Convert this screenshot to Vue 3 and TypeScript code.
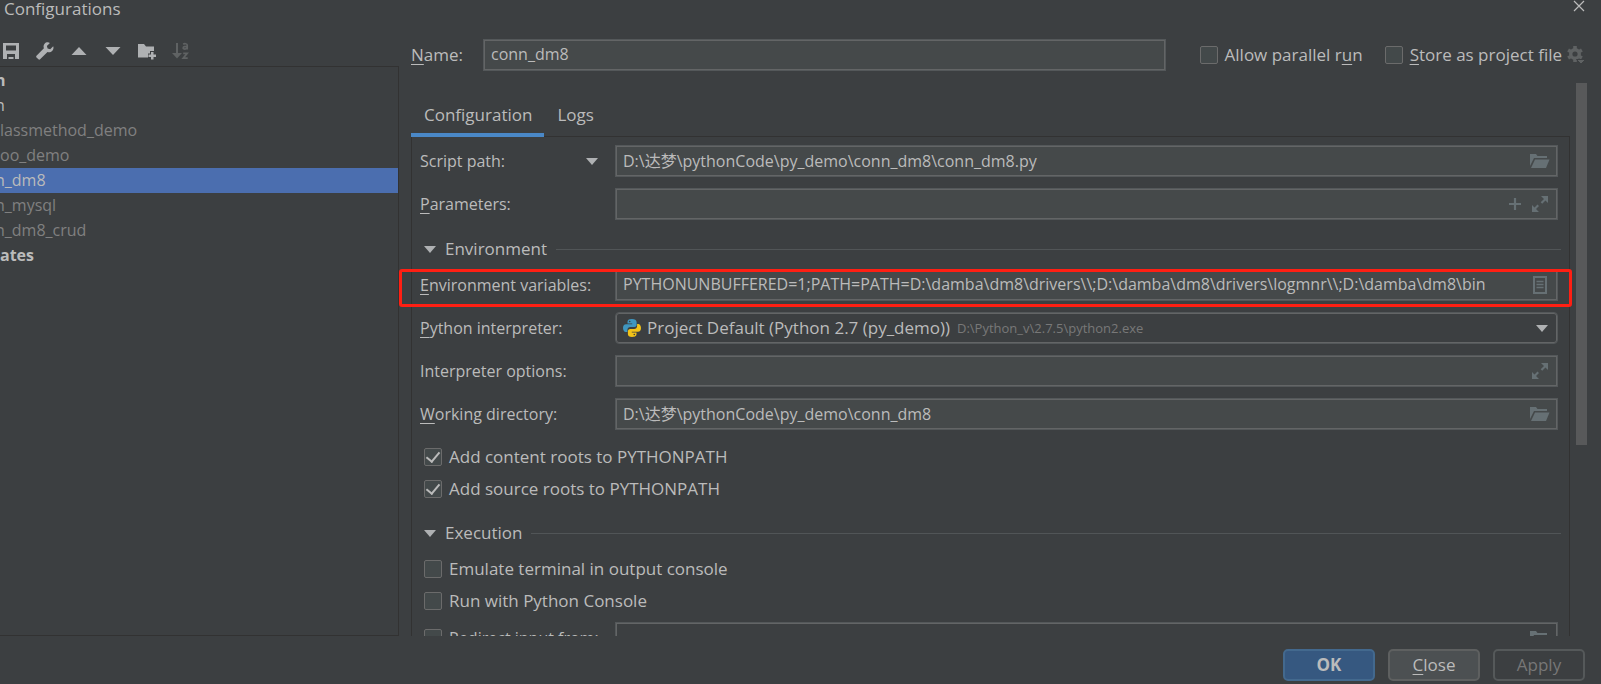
<script setup lang="ts">
import { ref } from 'vue'

interface TreeRow {
  text: string
  kind: 'group' | 'folder' | 'item'
  cut?: boolean
  selected?: boolean
}

const rows: TreeRow[] = [
  { text: 'n', kind: 'group', cut: true },
  { text: 'n', kind: 'folder', cut: true },
  { text: 'lassmethod_demo', kind: 'item' },
  { text: 'oo_demo', kind: 'item' },
  { text: 'n_dm8', kind: 'item', cut: true, selected: true },
  { text: 'n_mysql', kind: 'item', cut: true },
  { text: 'n_dm8_crud', kind: 'item', cut: true },
  { text: 'ates', kind: 'group' },
]

const name = ref('conn_dm8')
const script = ref('D:\\达梦\\pythonCode\\py_demo\\conn_dm8\\conn_dm8.py')
const parameters = ref('')
const environment = ref(
  'PYTHONUNBUFFERED=1;PATH=PATH=D:\\damba\\dm8\\drivers\\\\;D:\\damba\\dm8\\drivers\\logmnr\\\\;D:\\damba\\dm8\\bin',
)
const options = ref('')
const directory = ref('D:\\达梦\\pythonCode\\py_demo\\conn_dm8')
const redirect = ref('')
const parallel = ref(false)
const store = ref(false)
const contentRoots = ref(true)
const sourceRoots = ref(true)
const emulate = ref(false)
const pyConsole = ref(false)
const redirectOn = ref(false)
</script>

<template>
  <div class="dialog">
    <header class="titlebar">
      <span>Configurations</span>
      <button class="icon close" aria-label="Close window">
        <svg width="12" height="12" viewBox="0 0 12 12"><path d="M1 1l10 10M11 1L1 11" fill="none" stroke="#bbb" stroke-width="1.2" /></svg>
      </button>
    </header>

    <div class="body">
      <aside class="side">
        <div class="toolbar">
          <button class="icon" aria-label="Save configuration">
            <svg width="16" height="16" viewBox="0 0 16 16"><path fill="#afb1b3" fill-rule="evenodd" d="M0 0h16v16H0zM3 2.500v5h10v-5zM4 11v5h1.500v-2h5v2H12v-5z" /><path fill="#afb1b3" d="M6.500 14.700h3V16h-3z" /></svg>
          </button>
          <button class="icon" aria-label="Edit templates">
            <svg width="18" height="18" viewBox="0 0 18 18"><path fill="#afb1b3" d="M17.200 4.200l-3 3-2.600-.7-.7-2.600 3-3C12-.1 9.800.3 8.600 1.800 7.500 3.100 7.300 4.800 7.900 6.300L.5 13.700c-.5.500-.5 1.200 0 1.700l1.900 1.900c.5.500 1.200.5 1.700 0L11.500 10c1.600.6 3.400.3 4.600-1 1.300-1.300 1.800-3.200 1.100-4.800z" /></svg>
          </button>
          <button class="icon" aria-label="Move up">
            <svg width="16" height="16" viewBox="0 0 16 16"><path fill="#afb1b3" d="M.5 12L8 4l7.500 8z" /></svg>
          </button>
          <button class="icon" aria-label="Move down">
            <svg width="16" height="16" viewBox="0 0 16 16"><path fill="#afb1b3" d="M.5 4L8 12l7.500-8z" /></svg>
          </button>
          <button class="icon" aria-label="Create folder">
            <svg width="18" height="16" viewBox="0 0 18 16"><path fill="#afb1b3" d="M0 1h6l2 2.500h8V8h-4v2.500h-2v4H0z" /><path fill="#afb1b3" d="M13 9h2.500v2.500H18V14h-2.500v2.500H13V14h-2.500v-2.500H13z" /></svg>
          </button>
          <button class="icon" aria-label="Sort configurations" disabled>
            <svg width="18" height="18" viewBox="0 0 18 18"><g fill="none" stroke="#5f6263"><path stroke-width="2" d="M5 1v13" /><path stroke-width="1.700" d="M11.200 2.200c1-.7 4-.8 4 .9V7.500M15.200 4.500c-2-.1-4 .1-4 1.500 0 1.500 3.200 1.500 4-.3M11.200 11.300h4l-4 4.800h4.500" /></g><path fill="#5f6263" d="M0 11h10l-5 5.500z" /></svg>
          </button>
        </div>
        <ul class="tree">
          <li v-for="(row, i) in rows" :key="i" :class="[row.kind, { selected: row.selected }]">
            <span :class="{ cut: row.cut }">{{ row.text }}</span>
          </li>
        </ul>
      </aside>

      <main class="main">
        <div class="name-row">
          <label class="name-label" for="name"><u>N</u>ame:</label>
          <div class="field name-field"><input id="name" v-model="name" type="text" /></div>
          <label class="check allow"><input v-model="parallel" type="checkbox" /><span>Allow parallel r<u>u</u>n</span></label>
          <label class="check"><input v-model="store" type="checkbox" /><span><u>S</u>tore as project file</span></label>
          <button class="icon gear" aria-label="Storage settings" disabled>
            <svg width="18" height="18" viewBox="0 0 18 18"><circle cx="8" cy="8" r="4.300" fill="none" stroke="#5f6263" stroke-width="3.400" /><g stroke="#5f6263" stroke-width="3.600"><path d="M8 0v3M8 13v3M1.100 4l2.600 1.500M12.300 10.500l2.600 1.500M1.100 12l2.600-1.500M12.300 5.500L14.900 4" /></g><path fill="#5f6263" stroke="#3c3f41" stroke-width="1" d="M9.500 13.500H18.500L14 18z" /></svg>
          </button>
        </div>

        <div class="viewport">
          <div class="content">
            <div class="tabs" role="tablist">
              <button class="tab active" role="tab" aria-selected="true">Configuration</button>
              <button class="tab" role="tab" aria-selected="false">Logs</button>
            </div>
            <div class="panel">
              <div class="row">
                <div class="label split">
                  <label for="script">Script path:</label>
                  <button class="icon" aria-label="Choose target type"><svg width="12" height="8" viewBox="0 0 12 8"><path fill="#afb1b3" d="M0 1h12L6 8z" /></svg></button>
                </div>
                <div class="field">
                  <input id="script" v-model="script" type="text" />
                  <button class="icon" aria-label="Browse script">
                    <svg width="20" height="16" viewBox="0 0 20 16"><path fill="#667074" d="M0 1h6l1.500 2H17v2H4L0 13z" /><path fill="#667074" d="M5 6.500h14.500L16 15H1z" /></svg>
                  </button>
                </div>
              </div>
              <div class="row">
                <label class="label" for="parameters"><u>P</u>arameters:</label>
                <div class="field">
                  <input id="parameters" v-model="parameters" type="text" />
                  <button class="icon" aria-label="Insert macro"><svg width="14" height="14" viewBox="0 0 14 14"><path d="M7 1v12M1 7h12" stroke="#667074" stroke-width="2.200" /></svg></button>
                  <button class="icon expand" aria-label="Expand parameters"><svg width="18" height="18" viewBox="0 0 18 18"><path fill="#667074" d="M10 1h7v7l-2.500-2.500-3.300 3.300-1.500-1.500 3.300-3.300zM1 17v-7l2.500 2.500 3-3L8 11l-3 3L8 17z" /></svg></button>
                </div>
              </div>

              <div class="section">
                <button class="icon" aria-label="Collapse Environment"><svg width="12" height="8" viewBox="0 0 12 8"><path fill="#afb1b3" d="M0 1h12L6 8z" /></svg></button>
                <span>Environment</span>
                <hr />
              </div>

              <div class="row marked">
                <label class="label" for="environment"><u>E</u>nvironment variables:</label>
                <div class="field">
                  <input id="environment" v-model="environment" type="text" />
                  <button class="icon list" aria-label="Edit environment variables"><svg width="14" height="18" viewBox="0 0 14 18"><path fill="none" stroke="#667074" stroke-width="2" d="M1 1h12v16H1z" /><path stroke="#667074" stroke-width="1.300" d="M3.500 5.500h7M3.500 8.500h7M3.500 11.500h7" /></svg></button>
                </div>
              </div>
              <div class="row">
                <label class="label" for="interpreter"><u>P</u>ython interpreter:</label>
                <div class="field combo">
                  <svg class="python" width="18" height="18" viewBox="0 0 18 18">
                    <path fill="#3f96bf" d="M8.900 0C5.500 0 4.500 1.200 4.500 2.900V4.500h4.700v.7H3C1.100 5.200 0 6.700 0 9s1.200 4 2.800 4h1.600v-2c0-1.800 1.300-3 3-3h4c1.300 0 2.200-1 2.200-2.300V2.900C13.600 1 11.800 0 8.900 0z" />
                    <path fill="#f2c318" d="M9.100 18c3.400 0 4.400-1.200 4.400-2.900v-1.600H8.800v-.7H15c1.900 0 3-1.500 3-3.800s-1.200-4-2.800-4h-1.100v2c0 1.800-1.300 3-3 3h-4c-1.300 0-2.200 1-2.200 2.300v2.800C4.900 17 6.200 18 9.100 18z" />
                    <circle cx="6.700" cy="2.500" r=".8" fill="#3c3f41" /><circle cx="11.300" cy="15.500" r=".8" fill="#3c3f41" />
                  </svg>
                  <select id="interpreter"><option>Project Default (Python 2.7 (py_demo))</option></select>
                  <span class="path">D:\Python_v\2.7.5\python2.exe</span>
                  <svg width="12" height="8" viewBox="0 0 12 8"><path fill="#afb1b3" d="M0 1h12L6 8z" /></svg>
                </div>
              </div>
              <div class="row">
                <label class="label" for="options">Interpreter options:</label>
                <div class="field">
                  <input id="options" v-model="options" type="text" />
                  <button class="icon expand" aria-label="Expand options"><svg width="18" height="18" viewBox="0 0 18 18"><path fill="#667074" d="M10 1h7v7l-2.500-2.500-3.300 3.300-1.500-1.500 3.300-3.300zM1 17v-7l2.500 2.500 3-3L8 11l-3 3L8 17z" /></svg></button>
                </div>
              </div>
              <div class="row">
                <label class="label" for="directory"><u>W</u>orking directory:</label>
                <div class="field">
                  <input id="directory" v-model="directory" type="text" />
                  <button class="icon" aria-label="Browse directory">
                    <svg width="20" height="16" viewBox="0 0 20 16"><path fill="#667074" d="M0 1h6l1.500 2H17v2H4L0 13z" /><path fill="#667074" d="M5 6.500h14.500L16 15H1z" /></svg>
                  </button>
                </div>
              </div>
              <div class="checks">
                <label class="check"><input v-model="contentRoots" type="checkbox" /><span>Add content roots to PYTHONPATH</span></label>
                <label class="check"><input v-model="sourceRoots" type="checkbox" /><span>Add source roots to PYTHONPATH</span></label>
              </div>

              <div class="section">
                <button class="icon" aria-label="Collapse Execution"><svg width="12" height="8" viewBox="0 0 12 8"><path fill="#afb1b3" d="M0 1h12L6 8z" /></svg></button>
                <span>Execution</span>
                <hr />
              </div>
              <div class="checks">
                <label class="check"><input v-model="emulate" type="checkbox" /><span>Emulate terminal in output console</span></label>
                <label class="check"><input v-model="pyConsole" type="checkbox" /><span>Run with Python Console</span></label>
              </div>
              <div class="row redirect">
                <label class="check label"><input v-model="redirectOn" type="checkbox" /><span>Redirect input from:</span></label>
                <div class="field off">
                  <input v-model="redirect" type="text" aria-label="Redirect input file" disabled />
                  <button class="icon" aria-label="Browse input file" disabled>
                    <svg width="20" height="16" viewBox="0 0 20 16"><path fill="#667074" d="M0 1h6l1.500 2H17v2H4L0 13z" /><path fill="#667074" d="M5 6.500h14.500L16 15H1z" /></svg>
                  </button>
                </div>
              </div>
            </div>
          </div>
          <div class="thumb"></div>
        </div>
      </main>
    </div>

    <footer class="footer">
      <button class="btn primary">OK</button>
      <button class="btn"><u>C</u>lose</button>
      <button class="btn ghost" disabled>Apply</button>
    </footer>
  </div>
</template>

<style>
body {
  margin: 0;
  background: #3c3f41;
}
</style>

<style scoped>
.dialog {
  display: flex;
  flex-direction: column;
  height: 100vh;
  overflow: hidden;
  background: #3c3f41;
  color: #bbb;
  font: 17px/24px "Open Sans", "Noto Sans CJK SC", sans-serif;
}
.dialog * {
  box-sizing: border-box;
}
button,
input,
select {
  margin: 0;
  padding: 0;
  border: 0;
  outline: 0;
  background: none;
  color: inherit;
  font: inherit;
}
svg {
  display: block;
  flex: none;
  overflow: visible;
}
u {
  text-underline-offset: 3px;
  text-decoration-thickness: 1px;
}
.icon {
  flex: none;
  display: flex;
  align-items: center;
  justify-content: center;
}
.titlebar {
  flex: none;
  display: flex;
  justify-content: space-between;
  height: 24px;
  padding: 0 16px 0 4px;
  line-height: 18px;
}
.close {
  height: 12px;
}
.body {
  flex: 1;
  min-height: 0;
  display: grid;
  grid-template-columns: 399px minmax(0, 1fr);
}
.side {
  display: flex;
  flex-direction: column;
  min-height: 0;
}
.toolbar {
  flex: none;
  display: flex;
  align-items: center;
  gap: 16px;
  height: 42px;
  padding: 12px 2px 0;
}
.toolbar .icon {
  width: 18px;
  height: 18px;
}
.tree {
  flex: 1;
  margin: 0;
  padding: 1px 0 0;
  list-style: none;
  border: 1px solid #323232;
  border-left: 0;
  overflow: hidden;
  font-size: 16px;
}
.tree li {
  height: 25px;
  line-height: 24px;
}
.cut {
  margin-left: -5px;
}
.item {
  color: #808080;
}
.group {
  font-weight: 700;
}
.selected {
  background: #4b6eaf;
  color: #bbb;
}
.main {
  display: flex;
  flex-direction: column;
  min-width: 0;
  min-height: 0;
}
.name-row {
  flex: none;
  display: flex;
  align-items: center;
  height: 59px;
  padding: 3px 16px 0 12px;
}
.name-label {
  width: 72px;
}
.field {
  flex: 1;
  min-width: 0;
  display: flex;
  align-items: center;
  gap: 8px;
  height: 32px;
  padding: 0 7px;
  background: #45494a;
  border: 1px solid #54585a;
  box-shadow: inset 0 0 0 1px #636566;
  font-size: 16px;
}
.field input {
  flex: 1;
  min-width: 0;
  height: 28px;
  padding-bottom: 2px;
}
.check {
  display: flex;
  align-items: center;
  gap: 7px;
  white-space: nowrap;
}
.check input {
  appearance: none;
  flex: none;
  display: grid;
  place-items: center;
  width: 18px;
  height: 18px;
  background: #43494a;
  border: 1px solid #6b6b6b;
  border-radius: 2px;
}
.check input:checked::after {
  content: "";
  width: 6px;
  height: 11px;
  margin-bottom: 3px;
  border: solid #bbb;
  border-width: 0 2px 2px 0;
  transform: rotate(40deg);
}
.allow {
  margin: 0 22px 0 34px;
}
.gear {
  margin-left: 5px;
}
.viewport {
  flex: 1;
  min-height: 0;
  display: flex;
  gap: 6px;
  padding-right: 14px;
  overflow: hidden;
}
.content {
  flex: 1;
  min-width: 0;
  padding-left: 12px;
}
.thumb {
  flex: none;
  width: 11px;
  height: 362px;
  background: #58595a;
}
.tabs {
  display: flex;
  height: 54px;
  padding-top: 14px;
}
.tab {
  padding: 0 12px 0 13px;
  border-bottom: 4px solid transparent;
}
.tab.active {
  border-color: #4a88c7;
}
.panel {
  margin-top: -1px;
  padding: 8px 11px 0 8px;
  border: 1px solid #323232;
}
.row {
  position: relative;
  display: flex;
  align-items: center;
  margin-bottom: 11px;
}
.label {
  flex: none;
  width: 195px;
  font-size: 16px;
}
.split {
  display: flex;
  align-items: center;
  justify-content: space-between;
  padding-right: 17px;
}
.expand,
.list {
  width: 20px;
}
.marked::after {
  content: "";
  position: absolute;
  inset: 0 -14px -6px -21px;
  border: 3px solid #ff1f13;
  border-radius: 3px;
  pointer-events: none;
}
.section {
  display: flex;
  align-items: center;
  gap: 9px;
  height: 24px;
  margin: 17px -3px 8px 4px;
}
.section hr {
  flex: 1;
  margin: 0;
  border: 0;
  border-top: 1px solid #515557;
}
.combo {
  gap: 6px;
  padding-right: 9px;
  background: #3c3f41;
  border-radius: 4px;
}
.combo select {
  appearance: none;
  font-size: 17px;
}
.path {
  flex: 1;
  color: #787878;
  font-size: 13px;
}
.checks {
  margin-bottom: -1px;
}
.checks .check {
  height: 32px;
  margin-left: 4px;
}
.redirect {
  margin-top: 6px;
}
.redirect .label {
  padding-left: 4px;
}
.off {
  background: #3c3f41;
}
.footer {
  flex: none;
  display: flex;
  justify-content: flex-end;
  gap: 13px;
  height: 48px;
  padding: 13px 16px 3px;
}
.btn {
  width: 92px;
  height: 32px;
  background: #4c5052;
  border: 2px solid #5e6060;
  border-radius: 5px;
}
.primary {
  background: #365880;
  border-color: #43698e;
  font-weight: 700;
}
.ghost {
  background: none;
  border-color: #55595a;
  color: #777;
}
</style>
